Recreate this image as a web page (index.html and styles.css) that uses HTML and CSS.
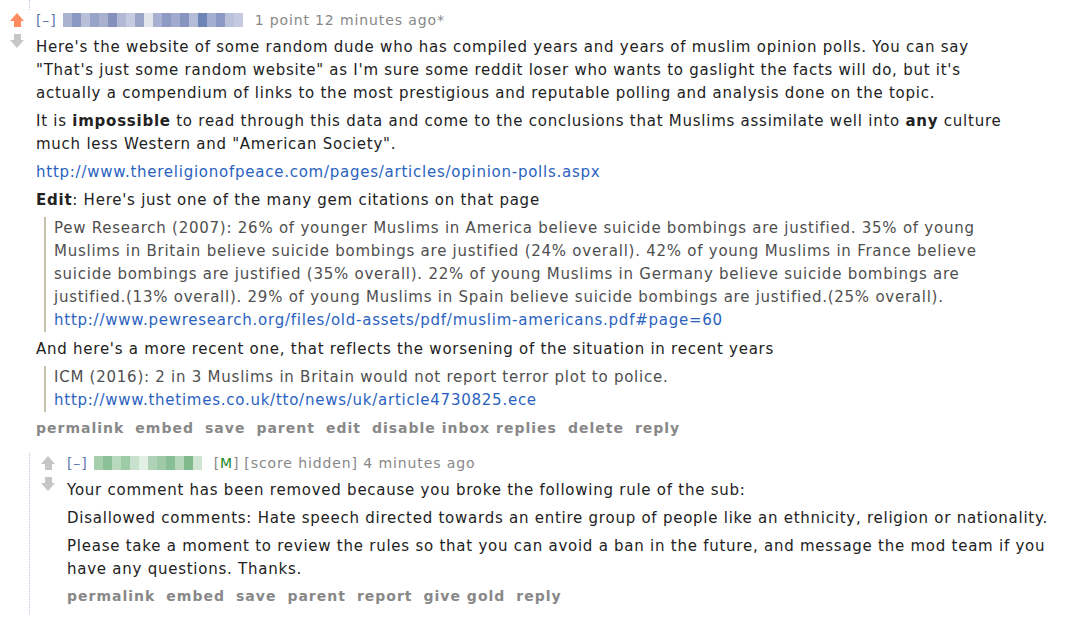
FILE: index.html
```html
<!DOCTYPE html>
<html lang="en">
<head>
<meta charset="UTF-8">
<title>comment</title>
<link rel="stylesheet" href="styles.css">
</head>
<body>
  <div class="thread-top"></div>
  <div class="comment">
    <div class="midcol">
      <span class="arrow up upmod"></span>
      <span class="arrow down"></span>
    </div>
    <div class="entry">
      <p class="tagline">
        <a class="expand">[&ndash;]</a>
        <span class="blur blue">
          <i style="background:#a9b3d0"></i><i style="background:#8b98c2"></i><i style="background:#b7bfd9"></i><i style="background:#97a3c9"></i><i style="background:#aab1cf"></i><i style="background:#8590bb"></i><i style="background:#b1b9d6"></i><i style="background:#c5cbe0"></i><i style="background:#9aa5c8"></i><i style="background:#e4e6ee"></i><i style="background:#a7b0d0"></i><i style="background:#8d9ac3"></i><i style="background:#a0abcd"></i><i style="background:#8593be"></i><i style="background:#b3bcd8"></i><i style="background:#6f84b6"></i><i style="background:#a3aed0"></i><i style="background:#8c99c4"></i><i style="background:#b9c1db"></i><i style="background:#c4cae0"></i>
        </span>
        <span class="score">1 point</span> <span class="time">12 minutes ago*</span>
      </p>
      <div class="md">
        <p>Here's the website of some random dude who has compiled years and years of muslim opinion polls. You can say "That's just some random website" as I'm sure some reddit loser who wants to gaslight the facts will do, but it's actually a compendium of links to the most prestigious and reputable polling and analysis done on the topic.</p>
        <p>It is <strong>impossible</strong> to read through this data and come to the conclusions that Muslims assimilate well into <strong>any</strong> culture much less Western and "American Society".</p>
        <p><a href="#">http://www.thereligionofpeace.com/pages/articles/opinion-polls.aspx</a></p>
        <p><strong>Edit</strong>: Here's just one of the many gem citations on that page</p>
        <blockquote>
          <p>Pew Research (2007): 26% of younger Muslims in America believe suicide bombings are justified. 35% of young Muslims in Britain believe suicide bombings are justified (24% overall). 42% of young Muslims in France believe suicide bombings are justified (35% overall). 22% of young Muslims in Germany believe suicide bombings are justified.(13% overall). 29% of young Muslims in Spain believe suicide bombings are justified.(25% overall). <a href="#">http://www.pewresearch.org/files/old-assets/pdf/muslim-americans.pdf#page=60</a></p>
        </blockquote>
        <p>And here's a more recent one, that reflects the worsening of the situation in recent years</p>
        <blockquote>
          <p>ICM (2016): 2 in 3 Muslims in Britain would not report terror plot to police. <a href="#">http://www.thetimes.co.uk/tto/news/uk/article4730825.ece</a></p>
        </blockquote>
      </div>
      <ul class="buttons">
        <li>permalink</li>
        <li>embed</li>
        <li>save</li>
        <li>parent</li>
        <li>edit</li>
        <li>disable inbox replies</li>
        <li>delete</li>
        <li>reply</li>
      </ul>
    </div>
  </div>

  <div class="child">
    <div class="comment">
      <div class="midcol">
        <span class="arrow up"></span>
        <span class="arrow down"></span>
      </div>
      <div class="entry">
        <p class="tagline">
          <a class="expand">[&ndash;]</a>
          <span class="blur green">
            <i style="background:#a7cfae"></i><i style="background:#8cc198"></i><i style="background:#b9d9bf"></i><i style="background:#9ccba5"></i><i style="background:#c8e2cd"></i><i style="background:#e2efe4"></i><i style="background:#b0d3b7"></i><i style="background:#9fcaa8"></i><i style="background:#88be94"></i><i style="background:#b5d6bb"></i><i style="background:#7fb98c"></i><i style="background:#cde5d1"></i>
          </span>
          <span class="mod"><span>[</span>M<span>]</span></span> <span class="time">[score hidden] 4 minutes ago</span>
        </p>
        <div class="md">
          <p>Your comment has been removed because you broke the following rule of the sub:</p>
          <p>Disallowed comments: Hate speech directed towards an entire group of people like an ethnicity, religion or nationality.</p>
          <p>Please take a moment to review the rules so that you can avoid a ban in the future, and message the mod team if you have any questions. Thanks.</p>
        </div>
        <ul class="buttons">
          <li>permalink</li>
          <li>embed</li>
          <li>save</li>
          <li>parent</li>
          <li>report</li>
          <li>give gold</li>
          <li>reply</li>
        </ul>
      </div>
    </div>
  </div>
</body>
</html>
```

FILE: styles.css
```css
body {
  margin: 0;
  padding: 0;
  background: #fff;
  font-family: "DejaVu Sans", Verdana, sans-serif;
  font-size: 15px;
  color: #222;
}

p {
  margin: 0;
}

a {
  color: #2a62c0;
  text-decoration: none;
}

.thread-top {
  margin-left: 29px;
  height: 10px;
  border-left: 1px dotted #b8c4e8;
}

.comment {
  display: flex;
  padding-left: 10px;
}

.midcol {
  width: 26px;
  display: flex;
  flex-direction: column;
  align-items: flex-start;
  gap: 7px;
  padding-top: 3px;
}

/* little reddit-style arrows drawn with css */
.arrow {
  position: relative;
  display: block;
  width: 15px;
  height: 14px;
}

.arrow::before,
.arrow::after {
  content: "";
  position: absolute;
}

.arrow.up::before {
  left: 0;
  top: 0;
  border-left: 7.5px solid transparent;
  border-right: 7.5px solid transparent;
  border-bottom: 8px solid #c6c6c6;
}

.arrow.up::after {
  left: 4px;
  top: 8px;
  width: 7px;
  height: 6px;
  background: #c6c6c6;
}

.arrow.down::before {
  left: 0;
  bottom: 0;
  border-left: 7.5px solid transparent;
  border-right: 7.5px solid transparent;
  border-top: 8px solid #c6c6c6;
}

.arrow.down::after {
  left: 4px;
  top: 0;
  width: 7px;
  height: 6px;
  background: #c6c6c6;
}

.arrow.upmod::before {
  border-bottom-color: #ff8b60;
}

.arrow.upmod::after {
  background: #ff8b60;
}

.entry {
  flex: 1;
  max-width: 985px;
}

.tagline {
  color: #888;
  font-size: 14px;
  letter-spacing: 0.9px;
  line-height: 20px;
  display: flex;
  align-items: center;
}

.tagline .expand {
  color: #5f78b0;
  margin-right: 6px;
}

.tagline .score {
  margin-right: 5px;
}

.blur {
  display: inline-flex;
  height: 14px;
  margin-right: 12px;
}

.blur i {
  display: block;
  width: 9px;
  height: 14px;
}

.mod {
  color: #228822;
  margin-right: 5px;
}

.mod span {
  color: #888;
}

.md {
  line-height: 23px;
  letter-spacing: 0.75px;
  margin-top: 6px;
}

.md p {
  margin-bottom: 5px;
}

.md strong {
  font-weight: bold;
}

blockquote {
  margin: 0 0 6px 8px;
  padding-left: 8px;
  border-left: 2px solid #c5c1ad;
  color: #4f4f4f;
}

blockquote p {
  margin: 0;
}

.buttons {
  list-style: none;
  margin: 0;
  padding: 0;
  display: flex;
  gap: 11px;
  font-weight: bold;
  font-size: 14px;
  letter-spacing: 1px;
  line-height: 20px;
  color: #888;
}

.child {
  margin-left: 29px;
  margin-top: 15px;
  border-left: 1px dotted #b8c4e8;
  padding-bottom: 8px;
}

.child .comment {
  padding-left: 11px;
}

.child .buttons {
  margin-top: 2px;
}
```
